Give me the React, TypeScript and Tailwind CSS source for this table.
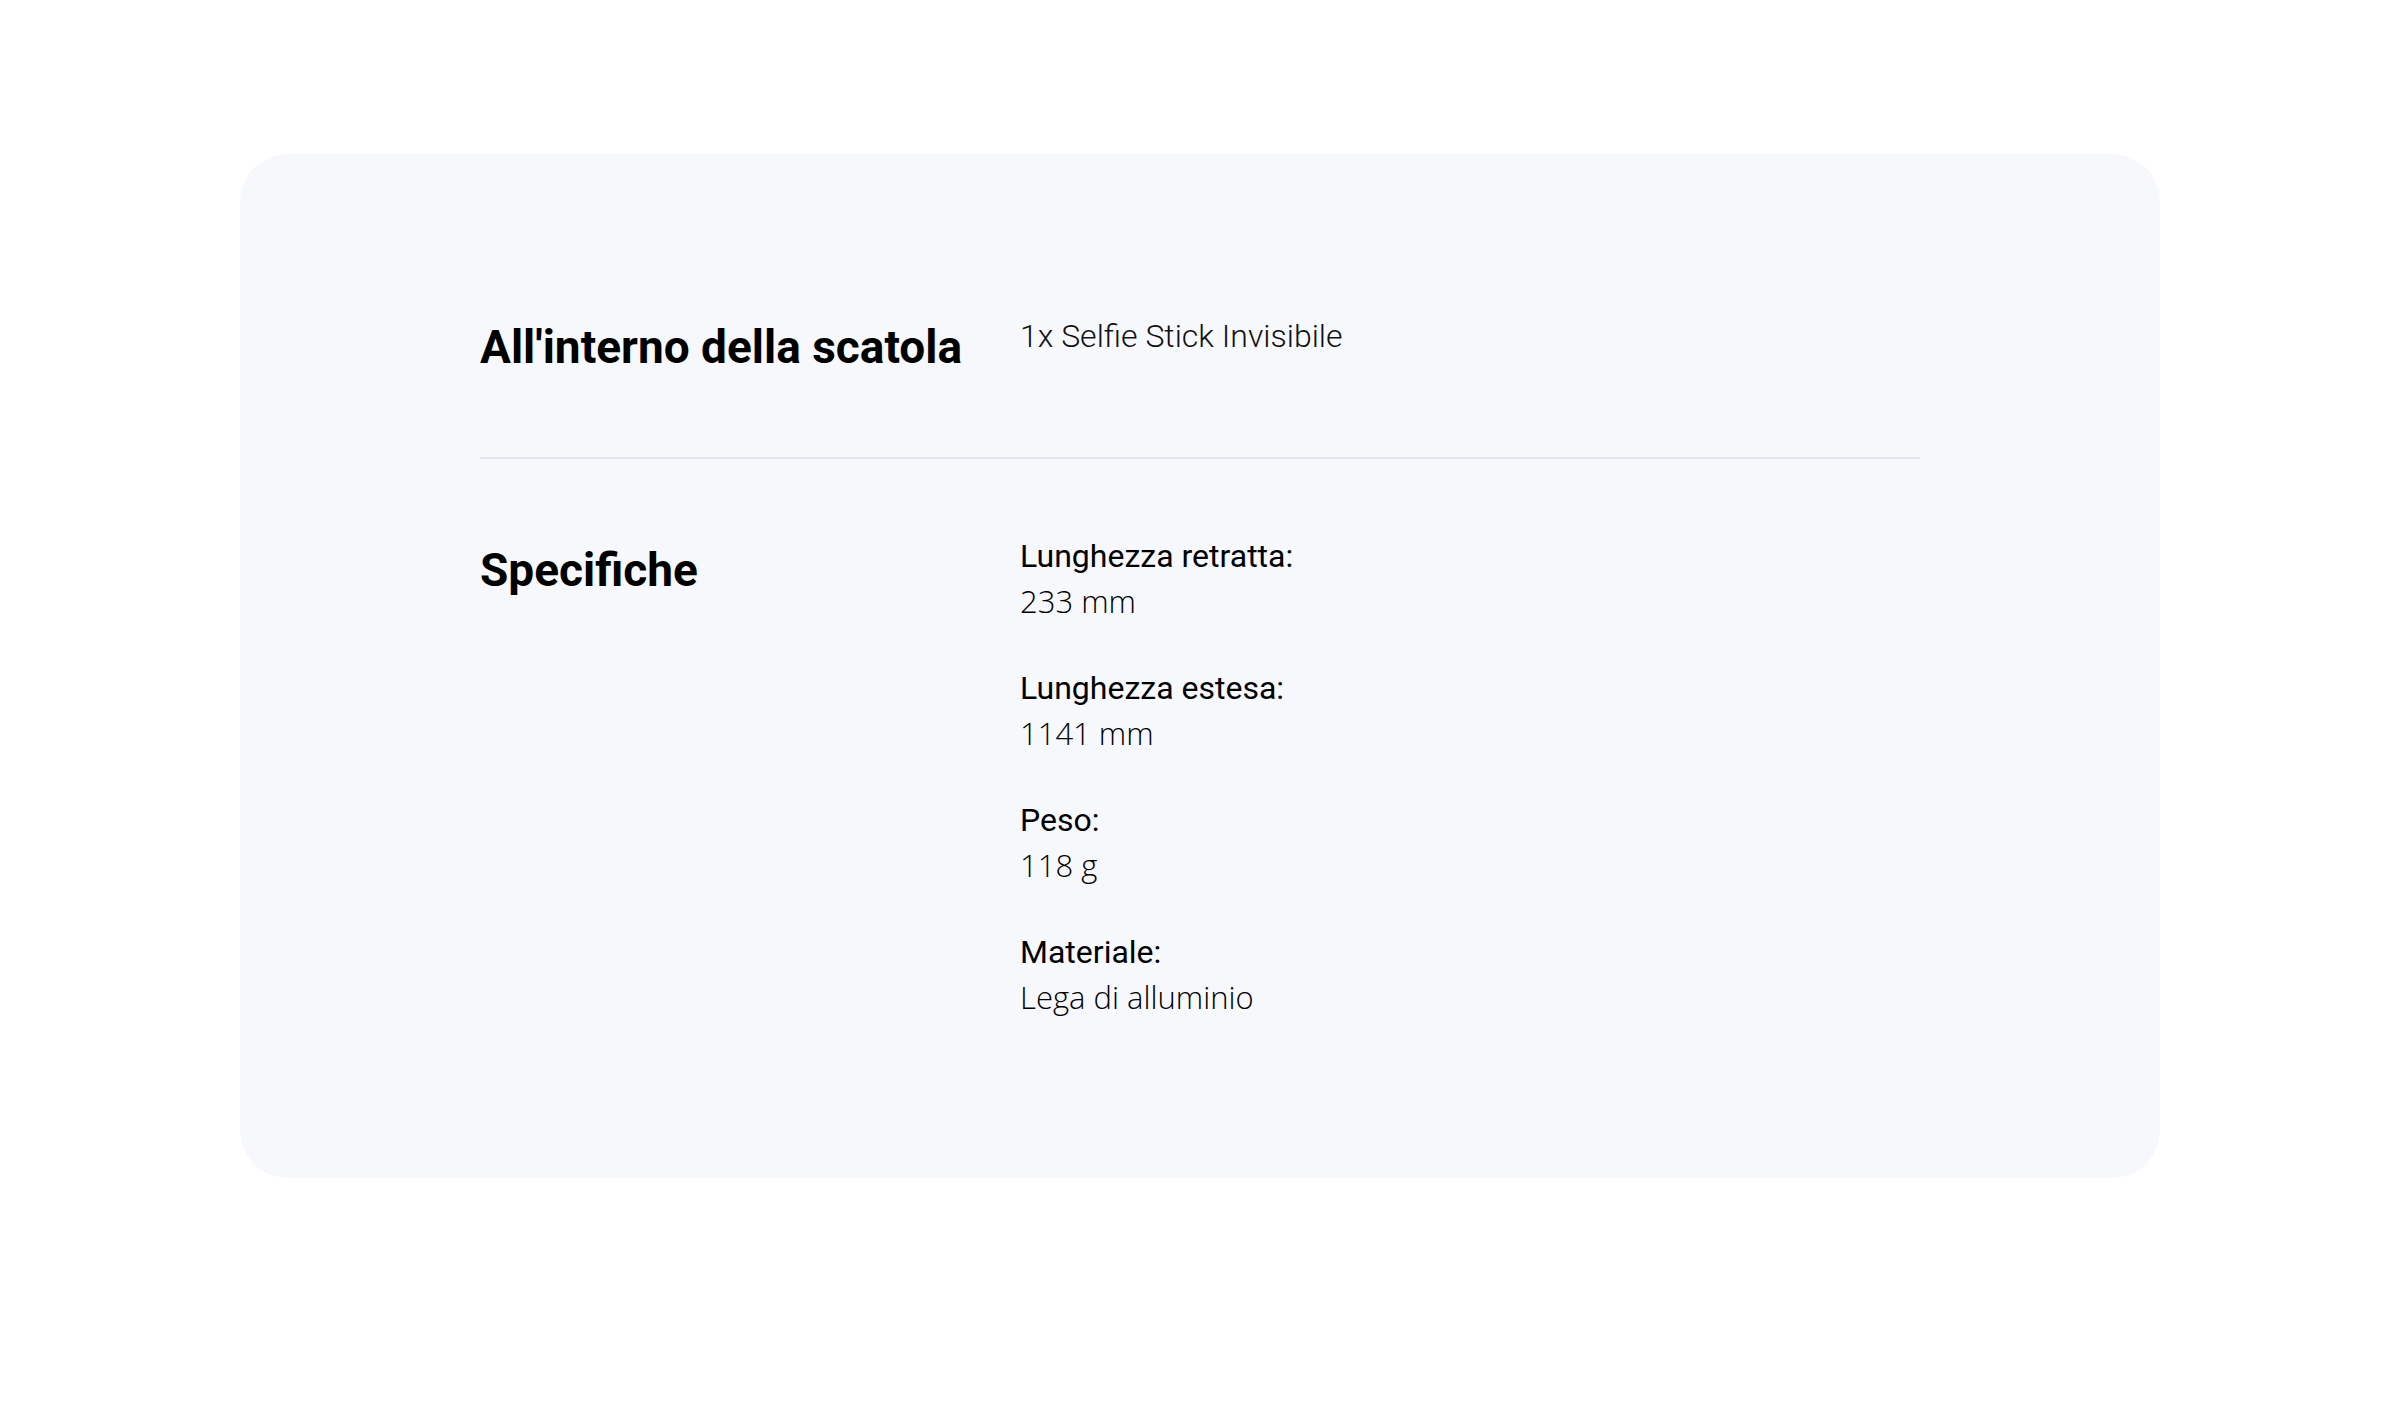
const specs = [
  { label: 'Lunghezza retratta:', value: '233 mm' },
  { label: 'Lunghezza estesa:', value: '1141 mm' },
  { label: 'Peso:', value: '118 g' },
  { label: 'Materiale:', value: 'Lega di alluminio' },
]

const App = () => {
  return (
    <div className="min-h-screen bg-white pt-[154px] pb-[240px] font-['Roboto',sans-serif] text-black">
      <section className="mx-auto w-[1920px] rounded-[48px] bg-[#f7f8fc] px-[240px] pt-[160px] pb-[158px]">
        {/* In the box */}
        <div className="grid grid-cols-[540px_1fr] items-start border-b-2 border-[#e3e5eb] pb-[82px]">
          <h2 className="mt-[6px] text-[46px] font-bold leading-[1.2]">All'interno della scatola</h2>
          <p className="text-[32px] font-light leading-[45px] text-[#111]">1x Selfie Stick Invisibile</p>
        </div>

        {/* Specs */}
        <div className="grid grid-cols-[540px_1fr] items-start pt-[75px]">
          <h2 className="mt-[9px] text-[46px] font-bold leading-[1.2]">Specifiche</h2>
          <dl className="flex flex-col gap-[42px]">
            {specs.map((s) => (
              <div key={s.label}>
                <dt className="text-[32px] leading-[45px]">{s.label}</dt>
                <dd className="-mt-[1px] font-['Open_Sans',sans-serif] text-[31px] font-light leading-[46px] text-black">
                  {s.value}
                </dd>
              </div>
            ))}
          </dl>
        </div>
      </section>
    </div>
  )
}

export default App
